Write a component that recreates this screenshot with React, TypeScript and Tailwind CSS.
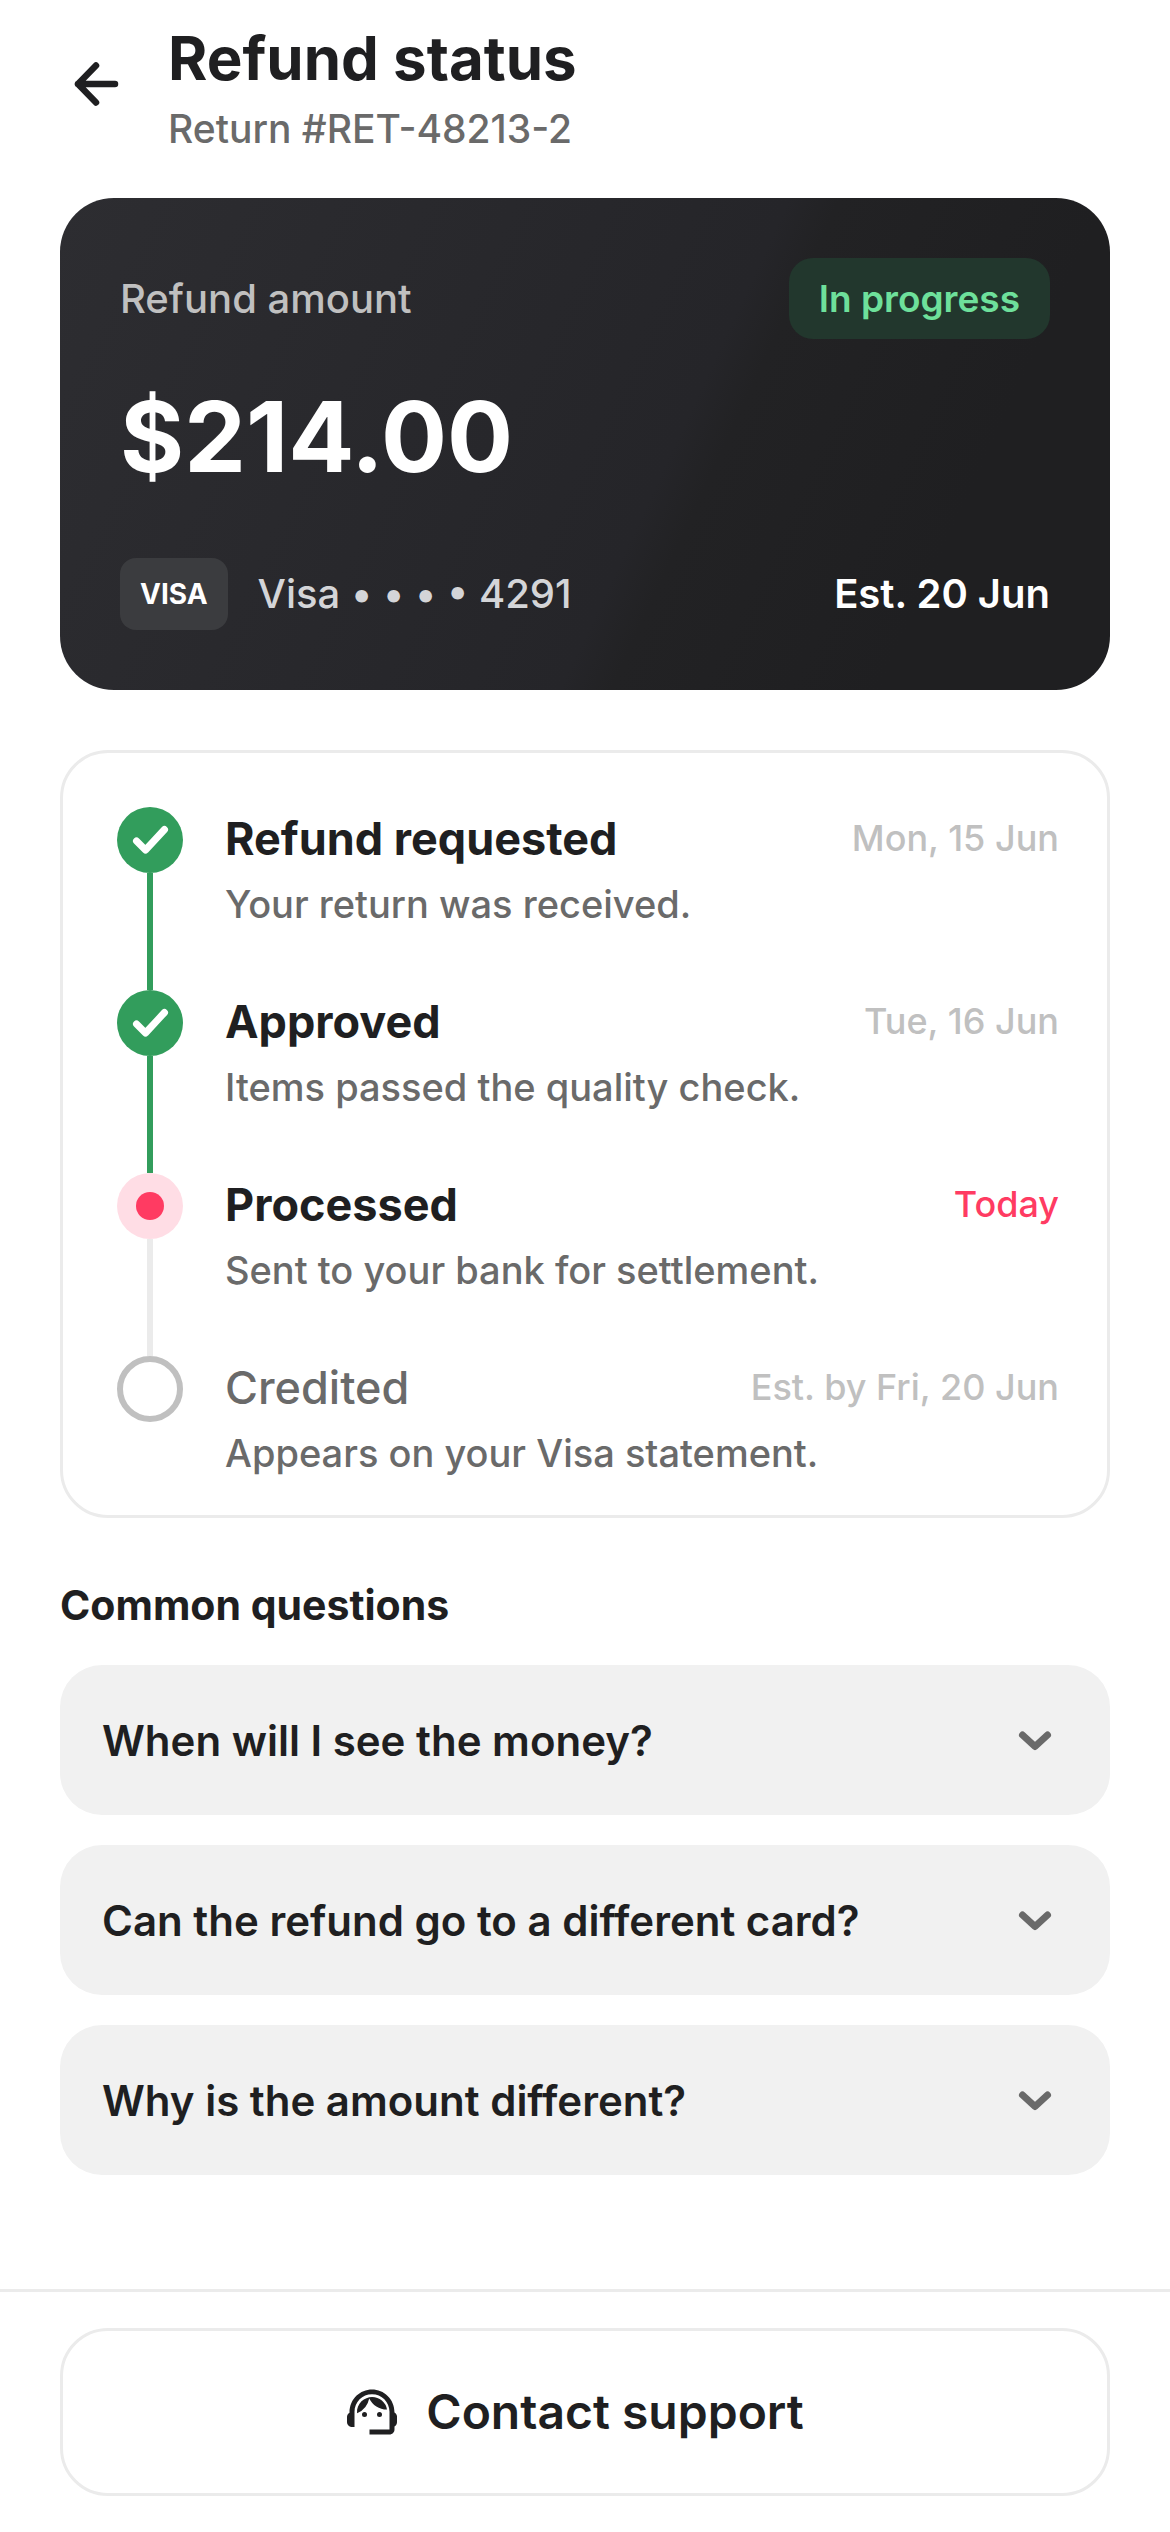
import { MdSupportAgent } from "react-icons/md";

type StepState = "done" | "current" | "pending";

const STEPS: { title: string; body: string; date: string; state: StepState }[] = [
  { title: "Refund requested", body: "Your return was received.", date: "Mon, 15 Jun", state: "done" },
  { title: "Approved", body: "Items passed the quality check.", date: "Tue, 16 Jun", state: "done" },
  { title: "Processed", body: "Sent to your bank for settlement.", date: "Today", state: "current" },
  { title: "Credited", body: "Appears on your Visa statement.", date: "Est. by Fri, 20 Jun", state: "pending" },
];

const QUESTIONS = [
  "When will I see the money?",
  "Can the refund go to a different card?",
  "Why is the amount different?",
];

function StepMarker({ state }: { state: StepState }) {
  if (state === "done") {
    return (
      <span className="flex size-[66px] shrink-0 rounded-full bg-[#329d5c]">
        <svg viewBox="0 0 66 66" className="size-full" fill="none" stroke="white" strokeWidth="7" strokeLinecap="round" strokeLinejoin="round" aria-hidden="true">
          <path d="M19.5 34 28.5 43 47.5 22.5" />
        </svg>
      </span>
    );
  }
  if (state === "current") {
    return (
      <span className="flex size-[66px] shrink-0 items-center justify-center rounded-full bg-[#ffdde5]">
        <span className="size-7 rounded-full bg-[#ff3b62]" />
      </span>
    );
  }
  return <span className="size-[66px] shrink-0 rounded-full border-6 border-[#c0c0c0]" />;
}

function Header() {
  return (
    <header className="flex items-start gap-9 px-15 pt-6">
      <button aria-label="Back" className="mt-6 size-[72px] shrink-0">
        <svg viewBox="0 0 72 72" className="size-full" fill="none" stroke="#1f1f21" strokeWidth="6.5" strokeLinecap="round" strokeLinejoin="round" aria-hidden="true">
          <path d="M55 36H18M36 17.5 18 36 36 54.5" />
        </svg>
      </button>
      <div>
        <h1 className="text-[60px] leading-[68px] font-bold">Refund status</h1>
        <p className="mt-2 text-[39px] leading-[58px] font-medium text-[#6a6a6a]">Return #RET-48213-2</p>
      </div>
    </header>
  );
}

function RefundCard() {
  return (
    <section className="rounded-[54px] bg-[linear-gradient(115deg,#2d2d31_0%,#252529_57%,#222224_61%,#1f1f21_82%)] p-15 text-white">
      <div className="flex h-[81px] items-center justify-between">
        <p className="text-[40px] font-medium text-[#c0c0c0]">Refund amount</p>
        <span className="flex h-full items-center rounded-3xl bg-[#22372d] px-[30px] text-[37px] font-semibold text-[#6ee09b]">
          In progress
        </span>
      </div>
      <p className="mt-9 text-[98px] leading-[123px] font-bold">$214.00</p>
      <div className="mt-15 flex h-[72px] items-center justify-between">
        <div className="flex h-full items-center gap-[30px]">
          <span className="flex h-full items-center rounded-2xl bg-[#3b3c3f] px-5 text-[28px] font-bold">VISA</span>
          <span className="text-[40px] font-medium text-[#d4d5d8]">Visa • • • • 4291</span>
        </div>
        <p className="text-[40px] font-semibold">Est. 20 Jun</p>
      </div>
    </section>
  );
}

function Timeline() {
  return (
    <ol className="mt-15 rounded-[48px] border-3 border-[#ebebeb] px-12 pt-[54px] pb-9">
      {STEPS.map((step, i) => {
        const last = i === STEPS.length - 1;
        return (
          <li key={step.title} className="flex gap-9">
            <div className="flex w-[78px] shrink-0 flex-col items-center">
              <StepMarker state={step.state} />
              {!last && <span className={`w-1.5 flex-1 ${step.state === "done" ? "bg-[#329d5c]" : "bg-[#ebebeb]"}`} />}
            </div>
            <div className={`flex-1 ${last ? "" : "pb-15"}`}>
              <div className="flex items-center justify-between leading-[63px]">
                <h2 className={`text-[45px] ${step.state === "pending" ? "font-medium text-[#6a6a6a]" : "font-bold"}`}>
                  {step.title}
                </h2>
                <span className={`text-[36px] font-medium ${step.state === "current" ? "text-[#ff3b62]" : "text-[#c0c0c0]"}`}>
                  {step.date}
                </span>
              </div>
              <p className="mt-2 text-[38px] leading-[52px] font-medium text-[#6a6a6a]">{step.body}</p>
            </div>
          </li>
        );
      })}
    </ol>
  );
}

function Questions() {
  return (
    <section className="mt-15">
      <h2 className="text-[41px] leading-[54px] font-bold">Common questions</h2>
      <div className="mt-[33px] flex flex-col gap-[30px]">
        {QUESTIONS.map((q) => (
          <button
            key={q}
            aria-expanded={false}
            className="flex h-[150px] items-center justify-between rounded-[42px] bg-[#f1f1f1] px-[42px] text-left text-[42px] font-semibold"
          >
            {q}
            <svg viewBox="0 0 66 66" className="size-[66px] shrink-0" fill="none" stroke="#6a6a6a" strokeWidth="7" strokeLinecap="round" strokeLinejoin="round" aria-hidden="true">
              <path d="M20.5 28 33 39.5 45.5 28" />
            </svg>
          </button>
        ))}
      </div>
    </section>
  );
}

export default function App() {
  return (
    <div className="flex min-h-screen flex-col bg-white font-['Inter',sans-serif] text-[#1f1f21]">
      <Header />
      <main className="px-15 pt-10 pb-15">
        <RefundCard />
        <Timeline />
        <Questions />
      </main>
      <footer className="mt-auto border-t-3 border-[#ebebeb] px-15 py-9">
        <button className="flex h-[168px] w-full items-center justify-center gap-6 rounded-[48px] border-3 border-[#ebebeb] pr-6 text-[48px] font-semibold">
          <MdSupportAgent className="size-15" aria-hidden="true" />
          Contact support
        </button>
      </footer>
    </div>
  );
}
